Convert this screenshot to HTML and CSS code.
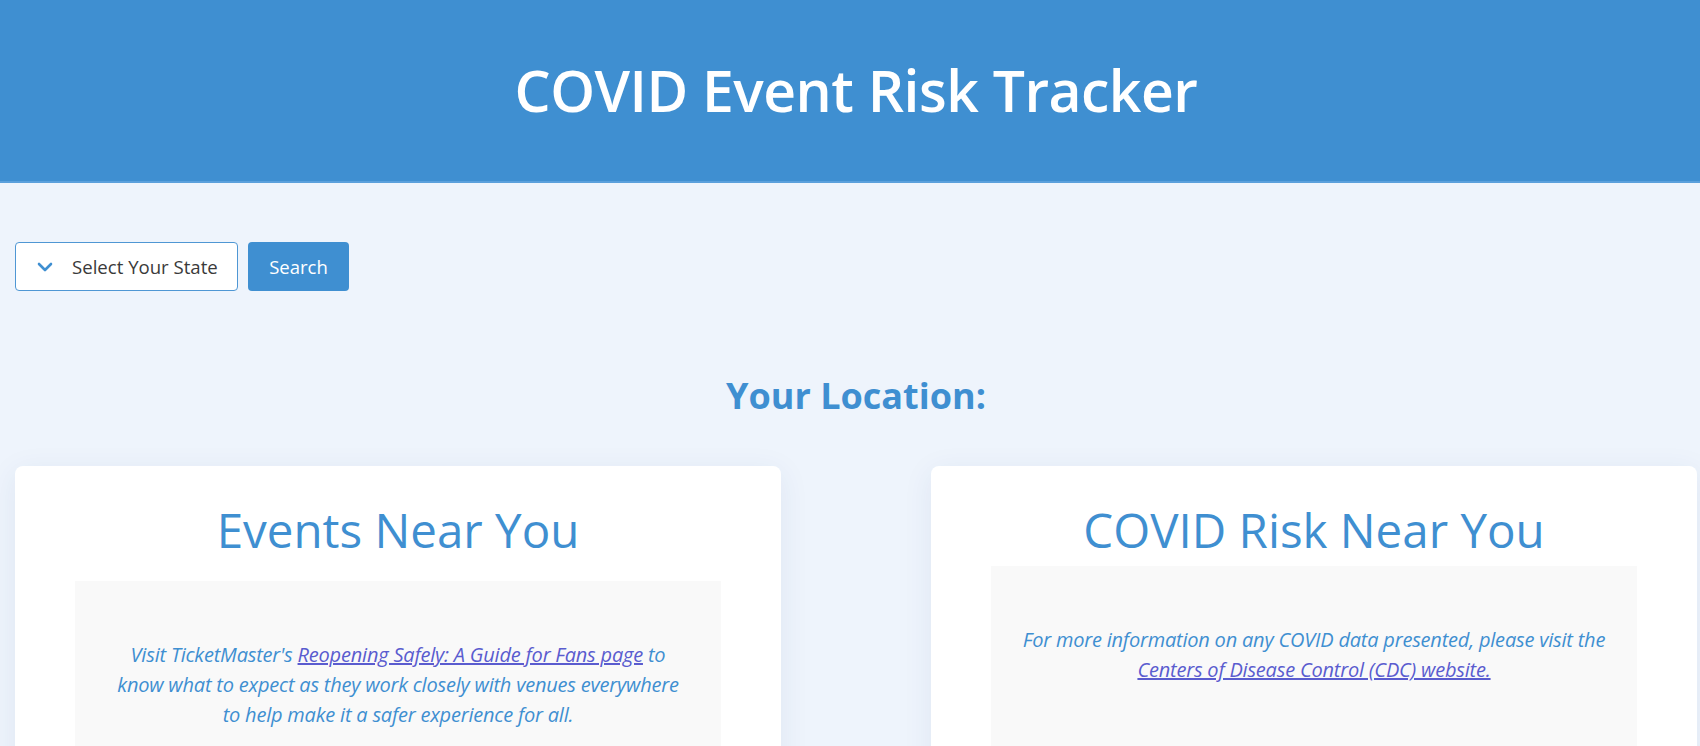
FILE: index.html
```html
<!DOCTYPE html>
<html lang="en">
<head>
<meta charset="utf-8">
<title>COVID Event Risk Tracker</title>
<link rel="stylesheet" href="styles.css">
</head>
<body>
<header class="site-header">
  <h1 class="site-title">COVID Event Risk Tracker</h1>
</header>
<main class="page">
  <form class="search-bar" onsubmit="return false">
    <div class="state-select">
      <svg class="chevron" width="16" height="10" viewBox="0 0 16 10" aria-hidden="true"><path d="M2 2 L8 8 L14 2" fill="none" stroke="currentColor" stroke-width="2.6" stroke-linecap="round" stroke-linejoin="round"/></svg>
      <span class="state-label">Select Your State</span>
    </div>
    <button class="search-btn" type="submit">Search</button>
  </form>
  <h2 class="location-title">Your Location:</h2>
  <section class="cards">
    <article class="card card--events">
      <h3 class="card-title">Events Near You</h3>
      <div class="card-body">
        <p class="card-note">Visit TicketMaster's <a href="#">Reopening Safely: A Guide for Fans page</a> to know what to expect as they work closely with venues everywhere to help make it a safer experience for all.</p>
      </div>
    </article>
    <article class="card card--risk">
      <h3 class="card-title">COVID Risk Near You</h3>
      <div class="card-body">
        <p class="card-note">For more information on any COVID data presented, please visit the <a href="#">Centers of Disease Control (CDC) website.</a></p>
      </div>
    </article>
  </section>
</main>
</body>
</html>
```
FILE: styles.css
```css
* { box-sizing: border-box; }
html, body { margin: 0; padding: 0; }
body {
  background: #eef4fc;
  font-family: "Open Sans", "Noto Sans", sans-serif;
  color: #333;
  overflow: hidden;
  height: 746px;
}
.site-header {
  background: #3f8fd1;
  height: 183px;
  border-bottom: 2px solid #5aa0dc;
  display: flex;
  align-items: center;
  justify-content: center;
  padding: 0 3px 0 15px;
}
.site-title {
  margin: 0;
  color: #fff;
  font-size: 57px;
  font-weight: 600;
  line-height: 1;
  letter-spacing: -0.5px;
}
.page {
  padding: 59px 3px 0 15px;
}
.search-bar {
  display: flex;
  gap: 10px;
  margin: 0;
}
.state-select {
  width: 223px;
  height: 49px;
  background: #fff;
  border: 1px solid #4f97d4;
  border-radius: 4px;
  display: flex;
  align-items: center;
  padding-left: 21px;
  gap: 19px;
}
.chevron { color: #3f8fd1; flex: none; }
.state-label {
  font-size: 18.6px;
  color: #3a3a3a;
}
.search-btn {
  width: 101px;
  height: 49px;
  background: #3f8fd1;
  color: #fff;
  border: none;
  border-radius: 4px;
  font-family: inherit;
  font-size: 18.5px;
  padding: 0;
}
.location-title {
  margin: 83px 0 0;
  text-align: center;
  color: #3f8fd1;
  font-size: 36px;
  font-weight: 700;
  line-height: 1.2;
}
.cards {
  margin-top: 49px;
  display: flex;
  justify-content: space-between;
}
.card {
  flex: 0 0 766px;
  background: #fff;
  border-radius: 8px;
  box-shadow: 0 6px 30px rgba(40, 70, 130, 0.08);
  padding-top: 34px;
  height: 400px;
}
.card-title {
  margin: 0 0 21px;
  text-align: center;
  color: #3f8fd1;
  font-size: 47.5px;
  font-weight: 400;
  line-height: 60px;
}
.card--risk .card-title { margin-bottom: 6px; }
.card-body {
  margin: 0 60px;
  background: #f9f9f9;
  height: 300px;
  padding: 59px 30px 0;
}
.card--events .card-body { padding: 59px 37px 0; }
.card-note {
  margin: 0;
  text-align: center;
  font-style: italic;
  font-size: 20px;
  line-height: 30px;
  color: #3f8fd1;
  letter-spacing: -0.2px;
}
.card-note a {
  color: #5a5ccf;
  text-decoration: underline;
}
```
